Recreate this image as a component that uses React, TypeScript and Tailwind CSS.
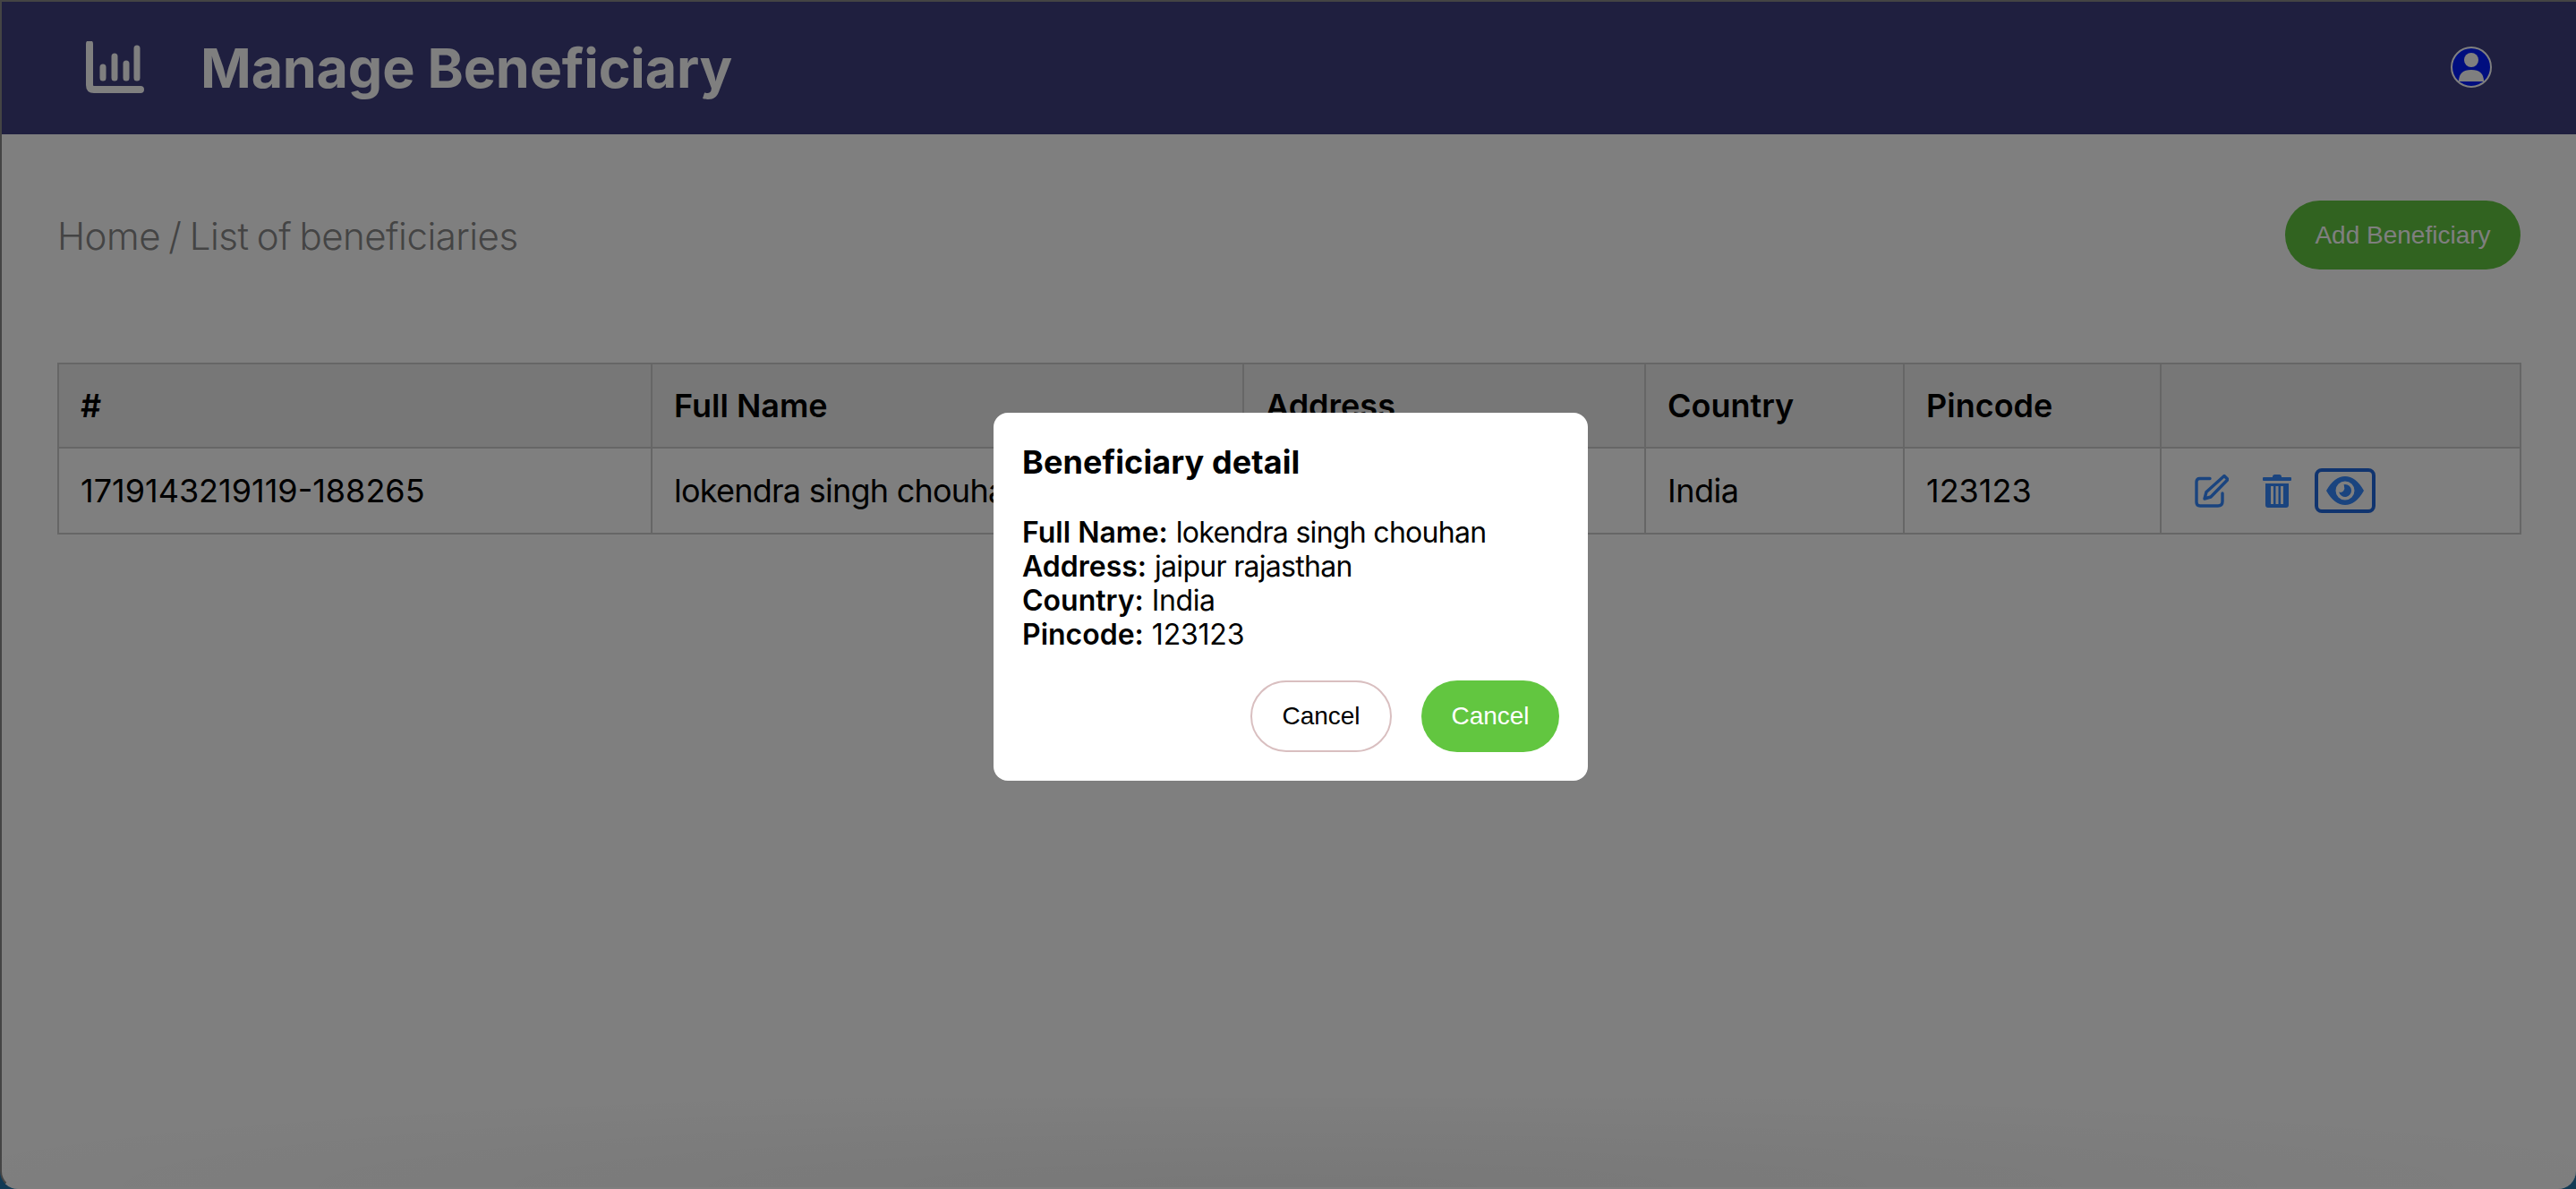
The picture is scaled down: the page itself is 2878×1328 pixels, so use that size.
const EditIcon = () => (
  <svg width="38" height="38" viewBox="0 0 38 38" fill="none" stroke="currentColor" strokeWidth="3.4" strokeLinecap="round" strokeLinejoin="round">
    <path d="M17 5.5H5.5Q2 5.5 2 9V32Q2 36 6 36H26Q31 36 31 31V22" />
    <path d="M33 2.5L37 6.5L18 26L11 28L13 20.5Z" />
  </svg>
);

const TrashIcon = () => (
  <svg width="32" height="37" viewBox="0 0 32 37" fill="currentColor">
    <path d="M11 2.5Q11 0 13.5 0H18.5Q21 0 21 2.5V3H31Q32 3 32 4V6Q32 7 31 7H1Q0 7 0 6V4Q0 3 1 3H11Z" />
    <path fillRule="evenodd" d="M3 10H29V34Q29 37 26 37H6Q3 37 3 34ZM9 13V33H12V13ZM14.5 13V33H17.5V13ZM20 13V33H23V13Z" />
  </svg>
);

const EyeIcon = () => (
  <svg width="42" height="32" viewBox="0 0 42 32" fill="currentColor">
    <path fillRule="evenodd" d="M0 16Q9 0 21 0Q33 0 42 16Q33 32 21 32Q9 32 0 16ZM21 5.5A10.5 10.5 0 1 0 21 26.5A10.5 10.5 0 1 0 21 5.5Z" />
    <path d="M21 9A7 7 0 1 1 14.2 17.5A4.5 4.5 0 0 0 20 11.5A5 5 0 0 0 19.5 9.2Q20 9 21 9Z" />
  </svg>
);

const ChartIcon = () => (
  <svg width="66" height="58" viewBox="0 0 66 58" fill="none" stroke="currentColor" strokeLinecap="round">
    <path d="M4 3V49Q4 54 9 54H61" strokeWidth="8" />
    <path d="M19 29V41M32 17V41M45 25V41M57 8V41" strokeWidth="7" />
  </svg>
);

const Avatar = () => (
  <svg width="46" height="46" viewBox="0 0 46 46">
    <circle cx="23" cy="23" r="22" fill="#001dff" stroke="#ffffff" strokeWidth="2" />
    <circle cx="23" cy="15" r="8" fill="#ffffff" />
    <path d="M9 39Q9 26 23 26Q37 26 37 39Z" fill="#ffffff" />
  </svg>
);

const headers = ["#", "Full Name", "Address", "Country", "Pincode", ""];
const cells = [
  { text: "1719143219119-188265", cls: "" },
  { text: "lokendra singh chouhan", cls: "tracking-[-0.75px]" },
  { text: "jaipur rajasthan", cls: "tracking-[-0.75px]" },
  { text: "India", cls: "tracking-[-0.5px]" },
  { text: "123123", cls: "" },
];
const widths = ["w-[663px]", "w-[661px]", "w-[449px]", "w-[289px]", "w-[287px]", "w-[402px]"];

const details = [
  { k: "Full Name:", v: "lokendra singh chouhan", cls: "tracking-[-0.7px]" },
  { k: "Address:", v: "jaipur rajasthan", cls: "tracking-[-0.7px]" },
  { k: "Country:", v: "India", cls: "tracking-[-0.4px]" },
  { k: "Pincode:", v: "123123", cls: "tracking-[-0.2px]" },
];

export default function App() {
  return (
    <div className="relative h-[1328px] w-[2878px] overflow-hidden bg-[#2474aa] font-['Inter',sans-serif] text-black">
      <div className="flex h-full flex-col overflow-hidden rounded-b-[20px] border-b-2 border-l-2 border-t-2 border-b-white border-l-[#888888] border-t-[#888888] bg-white">
        <header className="flex h-[148px] shrink-0 items-center justify-between bg-[#3e3e7e] pb-[2px] pl-[94px] pr-[94px] text-white">
          <div className="flex items-center gap-[62px]">
            <ChartIcon />
            <h1 className="mt-[2px] text-[61px] font-bold leading-none tracking-[-0.2px]">Manage Beneficiary</h1>
          </div>
          <Avatar />
        </header>
        <main className="flex flex-col px-[62px] pt-[74px]">
          <div className="flex h-[77px] items-center justify-between">
            <p className="mt-[2px] text-[42px] font-light tracking-[-0.5px] text-[#888888] [word-spacing:-2px]">
              Home / List of beneficiaries
            </p>
            <button className="h-[77px] w-[263px] rounded-full bg-[#62c640] font-['Liberation_Sans',sans-serif] text-[28px] text-white">
              Add Beneficiary
            </button>
          </div>
          <table className="mt-[104px] w-[2751px] table-fixed border-collapse text-[36px]">
            <thead>
              <tr className="h-[94px] bg-[#eeeeee]">
                {headers.map((h, i) => (
                  <th key={i} className={`${widths[i]} border-2 border-[#cccccc] px-[24px] text-left font-semibold`}>
                    {h}
                  </th>
                ))}
              </tr>
            </thead>
            <tbody>
              <tr className="h-[96px]">
                {cells.map((c) => (
                  <td key={c.text} className={`whitespace-nowrap border-2 border-[#cccccc] px-[24px] ${c.cls}`}>
                    {c.text}
                  </td>
                ))}
                <td className="border-2 border-[#cccccc] pl-[37px]">
                  <div className="flex items-center text-[#3488ff]">
                    <EditIcon />
                    <span className="ml-[38px]">
                      <TrashIcon />
                    </span>
                    <span className="ml-[26px] flex h-[50px] w-[68px] items-center justify-center rounded-[8px] border-4 border-[#2068de]">
                      <EyeIcon />
                    </span>
                  </div>
                </td>
              </tr>
            </tbody>
          </table>
        </main>
      </div>

      <div className="absolute inset-0 bg-black/50" />
      <div className="absolute bottom-[2px] left-0 right-0 h-[100px] bg-[radial-gradient(ellipse_at_bottom,rgba(0,0,0,0.06),transparent_80%)]" />

      <div className="absolute left-[1110px] top-[461px] flex h-[411px] w-[664px] flex-col rounded-[16px] bg-white px-[32px] pt-[33px]">
        <h2 className="text-[36px] font-bold leading-[44px] tracking-[0.1px]">Beneficiary detail</h2>
        <div className="mt-[38px] text-[32px] leading-[38px]">
          {details.map((d) => (
            <div key={d.k}>
              <span className="font-semibold">{d.k}</span> <span className={d.cls}>{d.v}</span>
            </div>
          ))}
        </div>
        <div className="mt-[32px] flex justify-end gap-[33px] font-['Liberation_Sans',sans-serif] text-[28px]">
          <button className="h-[80px] w-[158px] rounded-full border-2 border-[#d9bfc0] bg-white">Cancel</button>
          <button className="h-[80px] w-[154px] rounded-full bg-[#62c640] text-white">Cancel</button>
        </div>
      </div>
    </div>
  );
}
